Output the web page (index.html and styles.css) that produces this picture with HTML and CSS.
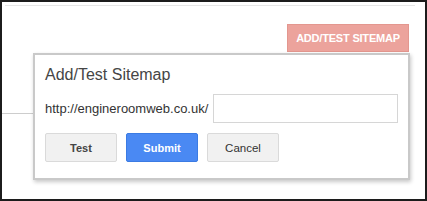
FILE: index.html
```html
<!DOCTYPE html>
<html lang="en">
<head>
    <meta charset="UTF-8">
    <title>Add/Test Sitemap</title>
    <link rel="stylesheet" href="styles.css">
</head>
<body>
    <div class="frame">
        <div class="panel">
            <div class="toolbar">
                <button class="btn-add">ADD/TEST SITEMAP</button>
            </div>
            <div class="rule"></div>
        </div>

        <div class="dialog">
            <h2 class="dialog-title">Add/Test Sitemap</h2>
            <div class="url-row">
                <label for="sitemap">http://engineroomweb.co.uk/</label>
                <input type="text" id="sitemap" name="sitemap">
            </div>
            <div class="actions">
                <button class="btn">Test</button>
                <button class="btn btn-blue">Submit</button>
                <button class="btn btn-plain">Cancel</button>
            </div>
        </div>
    </div>
</body>
</html>
```

FILE: styles.css
```css
* {
    margin: 0;
    padding: 0;
    box-sizing: border-box;
}

body {
    font-family: Arial, "Liberation Sans", sans-serif;
    background: #fff;
}

.frame {
    position: relative;
    width: 427px;
    height: 201px;
    border: 2px solid #1c1c1c;
    background: #fff;
}

.panel {
    margin: 3px 10px 0 3px;
    border-top: 1px solid #e6e6e6;
}

.toolbar {
    display: flex;
    justify-content: flex-end;
    padding: 18px 6px 0 0;
}

.btn-add {
    width: 122px;
    height: 28px;
    background: #eca39c;
    border: 1px solid #e3978f;
    color: #fff;
    font-family: Arial, "Liberation Sans", sans-serif;
    font-size: 11px;
    font-weight: bold;
    letter-spacing: -0.2px;
}

.rule {
    width: 40px;
    margin: 61px 0 0 -3px;
    border-top: 1px solid #cdcdcd;
}

/* popup over the page */
.dialog {
    position: absolute;
    left: 31px;
    top: 51px;
    width: 377px;
    height: 127px;
    padding: 10px 10px 0 10px;
    background: #fff;
    border: 2px solid #c9c9c9;
    box-shadow: 1px 2px 4px rgba(0, 0, 0, 0.22);
}

.dialog-title {
    font-size: 16px;
    font-weight: normal;
    line-height: 20px;
    color: #454545;
    margin-bottom: 9px;
}

.url-row {
    display: flex;
    align-items: center;
    gap: 5px;
}

.url-row label {
    font-size: 13px;
    color: #333;
}

.url-row input {
    width: 186px;
    height: 29px;
    border: 1px solid #d6d6d6;
}

.actions {
    display: flex;
    gap: 9px;
    margin-top: 10px;
}

.btn {
    width: 72px;
    height: 29px;
    background: #f1f1f1;
    border: 1px solid #dadada;
    border-radius: 2px;
    color: #444;
    font-family: Arial, "Liberation Sans", sans-serif;
    font-size: 11px;
    font-weight: bold;
}

.btn-blue {
    background: #4a89f3;
    border-color: #3b7be3;
    color: #fff;
}

.btn-plain {
    font-weight: normal;
    font-size: 11.5px;
    color: #333;
}
```
